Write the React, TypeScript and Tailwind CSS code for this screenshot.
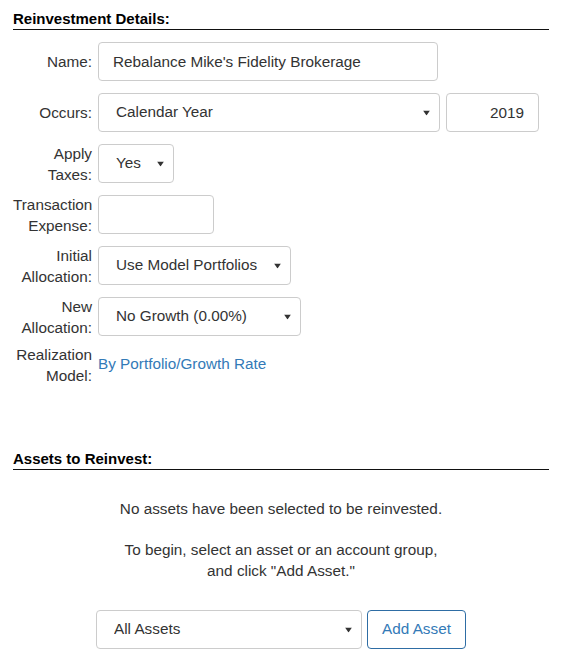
import { ReactNode } from 'react';

const font = { fontFamily: '"Liberation Sans", Arial, sans-serif' };

function Caret() {
  return (
    <svg className="pointer-events-none absolute right-[10px] top-1/2 -translate-y-1/2" width="7" height="5" viewBox="0 0 7 5">
      <path d="M0 0h7L3.5 5z" fill="#333" />
    </svg>
  );
}

function Select({ value, width }: { value: string; width: string }) {
  return (
    <div className={`relative h-[39px] ${width}`}>
      <select
        defaultValue={value}
        className="h-full w-full appearance-none rounded border border-[#ccc] bg-white pl-[17px] pr-6 text-[15.3px] text-[#333] outline-none"
      >
        <option>{value}</option>
      </select>
      <Caret />
    </div>
  );
}

function Row({ label, children, className = '' }: { label: ReactNode; children: ReactNode; className?: string }) {
  return (
    <div className={`flex h-[39px] items-center gap-[6px] ${className}`}>
      <div className="flex h-[39px] w-[79px] shrink-0 flex-col justify-center text-right leading-[21px]">
        <div className="whitespace-nowrap">{label}</div>
      </div>
      {children}
    </div>
  );
}

function SectionHeader({ title, className = '' }: { title: string; className?: string }) {
  return (
    <div className={`border-b border-[#111] pb-[2px] text-[15px] font-bold leading-[17px] text-black ${className}`}>
      {title}
    </div>
  );
}

export default function App() {
  return (
    <div style={font} className="min-h-[668px] bg-white pl-[13px] pr-[12px] pt-[10px] text-[15.3px] text-[#333]">
      <SectionHeader title="Reinvestment Details:" />

      <div className="mt-[12px] flex flex-col gap-[12px]">
        <Row label="Name:">
          <input
            defaultValue="Rebalance Mike's Fidelity Brokerage"
            className="h-[39px] w-[340px] rounded border border-[#ccc] px-[14px] text-[15.3px] text-[#333] outline-none"
          />
        </Row>
        <Row label="Occurs:">
          <Select value="Calendar Year" width="w-[342px]" />
          <input
            defaultValue="2019"
            className="h-[39px] w-[93px] rounded border border-[#ccc] px-[14px] text-right text-[15.3px] text-[#333] outline-none"
          />
        </Row>
        <Row label={<>Apply<br />Taxes:</>}>
          <Select value="Yes" width="w-[76px]" />
        </Row>
        <Row label={<>Transaction<br />Expense:</>}>
          <input className="h-[39px] w-[116px] rounded border border-[#ccc] px-[14px] text-[15.3px] outline-none" />
        </Row>
        <Row label={<>Initial<br />Allocation:</>}>
          <Select value="Use Model Portfolios" width="w-[193px]" />
        </Row>
        <Row label={<>New<br />Allocation:</>}>
          <Select value="No Growth (0.00%)" width="w-[203px]" />
        </Row>
        <Row label={<>Realization<br />Model:</>} className="-mt-[3px]">
          <a href="#" className="text-[#337ab7]">By Portfolio/Growth Rate</a>
        </Row>
      </div>

      <SectionHeader title="Assets to Reinvest:" className="mt-[66px]" />

      <div className="mt-[28px] text-center leading-[21px]">
        <p>No assets have been selected to be reinvested.</p>
        <p className="mt-[20px]">
          To begin, select an asset or an account group,
          <br />
          and click "Add Asset."
        </p>
      </div>

      <div className="mt-[29px] flex justify-center gap-[5px]">
        <Select value="All Assets" width="w-[266px]" />
        <button className="h-[39px] w-[99px] rounded border border-[#2e6da4] bg-white text-[15.3px] text-[#337ab7]">
          Add Asset
        </button>
      </div>
    </div>
  );
}
